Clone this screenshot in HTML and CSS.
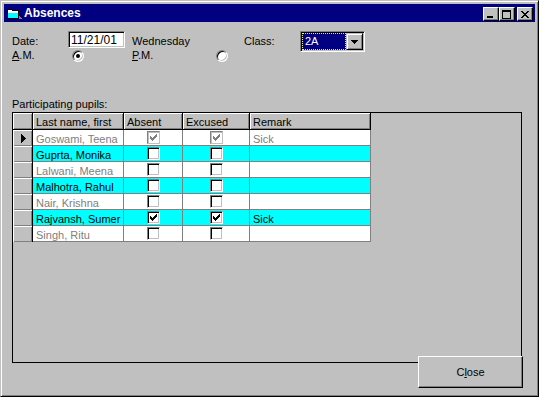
FILE: index.html
```html
<!DOCTYPE html>
<html lang="en">
<head>
  <meta charset="UTF-8">
  <title>Absences</title>
  <link rel="stylesheet" href="styles.css">
</head>
<body>
<div class="window">
  <div class="titlebar">
    <svg class="app-icon" width="16" height="12" viewBox="0 0 16 12" shape-rendering="crispEdges">
      <path d="M1 1h5v1h7v9H1z" fill="#000"/>
      <path d="M2 2h4v1h6v2H2z" fill="#fff"/>
      <path d="M2 5h10v5H2z" fill="#00ffff"/>
      <path d="M13 8h1v1h1v1h1v1h-3z" fill="#808080"/>
    </svg>
    <span class="title">Absences</span>
    <div class="caption-buttons">
      <button class="cap-btn"><span class="glyph-min"></span></button>
      <button class="cap-btn"><span class="glyph-max"></span></button>
      <button class="cap-btn cap-close">
        <svg width="8" height="7" viewBox="0 0 8 7" shape-rendering="crispEdges"><path d="M0 0h2v1h-2z M6 0h2v1h-2z M1 1h2v1h-2z M5 1h2v1h-2z M2 2h4v1h-4z M3 3h2v1h-2z M2 4h4v1h-4z M1 5h2v1h-2z M5 5h2v1h-2z M0 6h2v1h-2z M6 6h2v1h-2z"/></svg>
      </button>
    </div>
  </div>

  <div class="client">
    <div class="form-row top">
      <span class="label w-date">Date:</span>
      <div class="textbox">11/21/01</div>
      <span class="label w-day">Wednesday</span>
      <span class="label w-class">Class:</span>
      <div class="combo">
        <span class="combo-value">2A</span>
        <span class="combo-btn">
          <svg width="7" height="4" viewBox="0 0 7 4" shape-rendering="crispEdges"><path d="M0 0h7v1h-1v1h-1v1h-1v1h-1v-1h-1v-1h-1v-1h-1z"/></svg>
        </span>
      </div>
    </div>
    <div class="form-row bottom">
      <span class="label w-am"><u>A</u>.M.</span>
      <span class="radio checked"></span>
      <span class="label w-pm"><u>P</u>.M.</span>
      <span class="radio"></span>
    </div>

    <div class="grid-caption">Participating pupils:</div>

    <div class="datagrid">
      <div class="grid-row head">
        <div class="cell sel"></div>
        <div class="cell name">Last name, first</div>
        <div class="cell absent">Absent</div>
        <div class="cell excused">Excused</div>
        <div class="cell remark">Remark</div>
      </div>

      <div class="grid-row data plain">
        <div class="cell sel">
          <svg width="5" height="9" viewBox="0 0 5 9" shape-rendering="crispEdges"><path d="M0 0h1v1h1v1h1v1h1v1h1v1h-1v1h-1v1h-1v1h-1v1h-1z"/></svg>
        </div>
        <div class="cell name">Goswami, Teena</div>
        <div class="cell absent box-cell"><span class="check dim"><svg class="tick" width="7" height="7" viewBox="0 0 7 7" shape-rendering="crispEdges"><path d="M6 0h1v1h-1z M5 1h2v1h-2z M0 2h1v1h-1z M4 2h3v1h-3z M0 3h2v1h-2z M3 3h3v1h-3z M0 4h5v1h-5z M1 5h3v1h-3z M2 6h1v1h-1z"/></svg></span></div>
        <div class="cell excused box-cell"><span class="check dim"><svg class="tick" width="7" height="7" viewBox="0 0 7 7" shape-rendering="crispEdges"><path d="M6 0h1v1h-1z M5 1h2v1h-2z M0 2h1v1h-1z M4 2h3v1h-3z M0 3h2v1h-2z M3 3h3v1h-3z M0 4h5v1h-5z M1 5h3v1h-3z M2 6h1v1h-1z"/></svg></span></div>
        <div class="cell remark">Sick</div>
      </div>

      <div class="grid-row data cyan">
        <div class="cell sel"></div>
        <div class="cell name">Guprta, Monika</div>
        <div class="cell absent box-cell"><span class="check"></span></div>
        <div class="cell excused box-cell"><span class="check"></span></div>
        <div class="cell remark"></div>
      </div>

      <div class="grid-row data plain">
        <div class="cell sel"></div>
        <div class="cell name">Lalwani, Meena</div>
        <div class="cell absent box-cell"><span class="check"></span></div>
        <div class="cell excused box-cell"><span class="check"></span></div>
        <div class="cell remark"></div>
      </div>

      <div class="grid-row data cyan">
        <div class="cell sel"></div>
        <div class="cell name">Malhotra, Rahul</div>
        <div class="cell absent box-cell"><span class="check"></span></div>
        <div class="cell excused box-cell"><span class="check"></span></div>
        <div class="cell remark"></div>
      </div>

      <div class="grid-row data plain">
        <div class="cell sel"></div>
        <div class="cell name">Nair, Krishna</div>
        <div class="cell absent box-cell"><span class="check"></span></div>
        <div class="cell excused box-cell"><span class="check"></span></div>
        <div class="cell remark"></div>
      </div>

      <div class="grid-row data cyan">
        <div class="cell sel"></div>
        <div class="cell name">Rajvansh, Sumer</div>
        <div class="cell absent box-cell"><span class="check"><svg class="tick" width="7" height="7" viewBox="0 0 7 7" shape-rendering="crispEdges"><path d="M6 0h1v1h-1z M5 1h2v1h-2z M0 2h1v1h-1z M4 2h3v1h-3z M0 3h2v1h-2z M3 3h3v1h-3z M0 4h5v1h-5z M1 5h3v1h-3z M2 6h1v1h-1z"/></svg></span></div>
        <div class="cell excused box-cell"><span class="check"><svg class="tick" width="7" height="7" viewBox="0 0 7 7" shape-rendering="crispEdges"><path d="M6 0h1v1h-1z M5 1h2v1h-2z M0 2h1v1h-1z M4 2h3v1h-3z M0 3h2v1h-2z M3 3h3v1h-3z M0 4h5v1h-5z M1 5h3v1h-3z M2 6h1v1h-1z"/></svg></span></div>
        <div class="cell remark">Sick</div>
      </div>

      <div class="grid-row data plain">
        <div class="cell sel"></div>
        <div class="cell name">Singh, Ritu</div>
        <div class="cell absent box-cell"><span class="check"></span></div>
        <div class="cell excused box-cell"><span class="check"></span></div>
        <div class="cell remark"></div>
      </div>
    </div>

    <div class="footer">
      <button class="push-btn">C<u>l</u>ose</button>
    </div>
  </div>
</div>
</body>
</html>
```

FILE: styles.css
```css
body {
  margin: 0;
  font-family: "Liberation Sans", Arial, sans-serif;
  font-size: 11px;
  color: #000;
}

.window {
  width: 539px;
  height: 397px;
  box-sizing: border-box;
  background-color: #c0c0c0;
  border: 1px solid;
  border-color: #c0c0c0 #000 #000 #c0c0c0;
  box-shadow: inset 1px 1px #fff, inset -1px -1px #808080;
  padding: 3px;
}

/* title bar */
.titlebar {
  height: 18px;
  background-color: #000080;
  color: white;
  display: flex;
  align-items: center;
  padding: 0 2px;
}

.app-icon {
  display: block;
  margin-top: 2px;
}

.title {
  margin-left: 2px;
  font-size: 12px;
  font-weight: bold;
  line-height: 18px;
}

.caption-buttons {
  margin-left: auto;
  display: flex;
  margin-top: 2px;
}

.cap-btn {
  width: 16px;
  height: 14px;
  box-sizing: border-box;
  padding: 0;
  background-color: #c0c0c0;
  border: 1px solid;
  border-color: #fff #000 #000 #fff;
  box-shadow: inset -1px -1px #808080;
  display: flex;
  align-items: center;
  justify-content: center;
}

.cap-btn svg {
  display: block;
}

.cap-close {
  margin-left: 2px;
}

.glyph-min {
  width: 6px;
  height: 2px;
  background-color: #000;
  align-self: flex-end;
  margin-bottom: 2px;
  margin-right: 3px;
}

.glyph-max {
  width: 9px;
  height: 9px;
  box-sizing: border-box;
  border: 1px solid #000;
  border-top-width: 2px;
  margin-right: 1px;
}

/* form area */
.client {
  padding: 9px 0 0 8px;
}

.form-row {
  display: flex;
}

.form-row.top {
  height: 17px;
}

.form-row.top .label {
  padding-top: 4px;
  line-height: 13px;
}

.form-row.bottom {
  height: 14px;
}

.form-row.bottom .label {
  line-height: 14px;
}

.w-date { width: 56px; }
.w-day { width: 112px; margin-left: 7px; }
.w-class { width: 56px; }
.w-am { width: 60px; }
.w-pm { width: 84px; margin-left: 48px; }

.textbox {
  width: 57px;
  height: 17px;
  box-sizing: border-box;
  background-color: white;
  border: 1px solid;
  border-color: #808080 #fff #fff #808080;
  box-shadow: inset 1px 1px #000, inset -1px -1px #c0c0c0;
  font-size: 12px;
  line-height: 13px;
  padding: 2px 0 0 2px;
  overflow: hidden;
}

.combo {
  width: 65px;
  height: 21px;
  box-sizing: border-box;
  display: flex;
  padding: 1px;
  background-color: white;
  border: 1px solid;
  border-color: #808080 #fff #fff #808080;
  box-shadow: inset 1px 1px #000, inset -1px -1px #c0c0c0;
}

.combo-value {
  flex: 1;
  background-color: #000080;
  color: white;
  outline: 1px dotted #ffff00;
  outline-offset: -1px;
  line-height: 17px;
  padding-left: 3px;
}

.combo-btn {
  width: 17px;
  box-sizing: border-box;
  background-color: #c0c0c0;
  border: 1px solid;
  border-color: #c0c0c0 #000 #000 #c0c0c0;
  box-shadow: inset 1px 1px #fff, inset -1px -1px #808080;
  display: flex;
  align-items: center;
  justify-content: center;
}

.combo-btn svg {
  display: block;
}

.radio {
  width: 12px;
  height: 12px;
  margin-top: 2px;
  box-sizing: border-box;
  border-radius: 50%;
  background-color: white;
  border: 1px solid;
  border-color: #808080 #fff #fff #808080;
  box-shadow: inset 1px 1px #000, inset -1px -1px #c0c0c0;
  display: flex;
  align-items: center;
  justify-content: center;
}

.radio.checked::after {
  content: "";
  width: 4px;
  height: 4px;
  border-radius: 50%;
  background-color: #000;
}

.grid-caption {
  margin-top: 36px;
  margin-bottom: 1px;
  line-height: 13px;
}

/* data grid */
.datagrid {
  width: 510px;
  height: 251px;
  box-sizing: border-box;
  border: 1px solid #000;
  background-color: #c0c0c0;
}

.grid-row {
  display: flex;
  width: 358px;
}

.cell {
  box-sizing: border-box;
  flex: none;
  white-space: nowrap;
  overflow: hidden;
  padding: 3px 0 0 3px;
  line-height: 12px;
}

.sel { width: 20px; padding: 0; }
.name { width: 91px; }
.absent { width: 59px; }
.excused { width: 67px; }
.remark { width: 121px; }

.grid-row.head {
  height: 17px;
  border-bottom: 1px solid #000;
  box-sizing: border-box;
}

.head .cell {
  background-color: #c0c0c0;
  border-right: 1px solid #000;
  box-shadow: inset 1px 1px #fff, inset -1px -1px #808080;
}

.grid-row.data {
  height: 16px;
}

.data .cell {
  border-right: 1px solid #808080;
  border-bottom: 1px solid #808080;
}

.data .cell.sel {
  background-color: #c0c0c0;
  border-right: 1px solid #000;
  border-bottom: none;
  box-shadow: inset 1px 1px #fff, inset -1px -1px #808080;
  display: flex;
  align-items: center;
  justify-content: center;
}

.sel svg {
  display: block;
  margin-left: 1px;
}

.plain .cell {
  background-color: white;
  color: #808080;
}

.cyan .cell {
  background-color: #00ffff;
  color: #000;
}

.box-cell {
  display: flex;
  justify-content: center;
  padding: 1px 0 0 0;
}

.check {
  width: 13px;
  height: 13px;
  box-sizing: border-box;
  background-color: white;
  border: 1px solid;
  border-color: #808080 #fff #fff #808080;
  box-shadow: inset 1px 1px #000, inset -1px -1px #c0c0c0;
  display: flex;
  align-items: center;
  justify-content: center;
}

.check .tick {
  display: block;
  fill: #000;
}

.check.dim {
  border-color: #808080 #c0c0c0 #c0c0c0 #808080;
  box-shadow: inset 1px 1px #c0c0c0;
}

.check.dim .tick {
  fill: #808080;
}

/* footer */
.footer {
  width: 511px;
  display: flex;
  justify-content: flex-end;
  margin-top: -7px;
}

.push-btn {
  width: 105px;
  height: 32px;
  box-sizing: border-box;
  padding: 0;
  background-color: #c0c0c0;
  border: 1px solid;
  border-color: #fff #000 #000 #fff;
  box-shadow: inset -1px -1px #808080;
  font-family: "Liberation Sans", Arial, sans-serif;
  font-size: 11px;
  color: #000;
}
```
